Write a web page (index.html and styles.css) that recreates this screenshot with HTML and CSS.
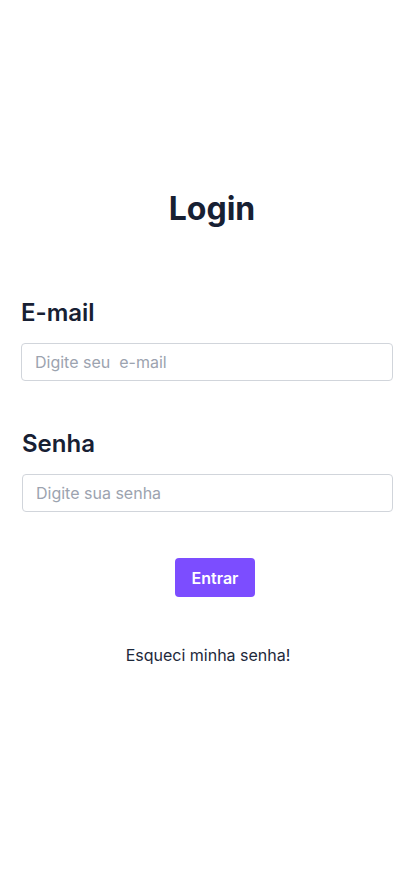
FILE: index.html
```html
<!DOCTYPE html>
<html lang="pt-BR">
<head>
<meta charset="utf-8">
<title>Login</title>
<link rel="stylesheet" href="styles.css">
</head>
<body>
<main class="login">
  <h1 class="title">Login</h1>
  <form class="form">
    <div class="field field-email">
      <label class="label" for="email">E-mail</label>
      <input class="input" id="email" type="email" placeholder="Digite seu  e-mail">
    </div>
    <div class="field field-senha">
      <label class="label" for="senha">Senha</label>
      <input class="input" id="senha" type="password" placeholder="Digite sua senha">
    </div>
    <div class="actions">
      <button class="btn" type="button">Entrar</button>
    </div>
  </form>
  <a class="forgot" href="#">Esqueci minha senha!</a>
</main>
</body>
</html>
```

FILE: styles.css
```css
* { box-sizing: border-box; }
html, body { margin: 0; padding: 0; background: #ffffff; }
body {
  font-family: Inter, "Noto Sans", sans-serif;
  color: #1e293b;
  width: 414px;
  height: 896px;
}
.login {
  display: flex;
  flex-direction: column;
  padding-top: 190px;
}
.title {
  margin: 0;
  padding-left: 10px;
  text-align: center;
  font-size: 32px;
  line-height: 38px;
  font-weight: 700;
  color: #172033;
}
.form {
  display: flex;
  flex-direction: column;
  margin-top: 69px;
}
.field {
  display: flex;
  flex-direction: column;
  gap: 14px;
  padding-right: 21px;
}
.field-email { padding-left: 21px; }
.field-senha { padding-left: 22px; margin-top: 47px; }
.label {
  font-size: 24px;
  line-height: 32px;
  font-weight: 600;
  color: #172033;
}
.input {
  height: 38px;
  width: 100%;
  border: 1px solid #d1d5db;
  border-radius: 4px;
  padding: 0 13px;
  font-family: Inter, "Noto Sans", sans-serif;
  font-size: 16px;
  color: #1e293b;
  background: #fff;
  outline: none;
}
.input::placeholder { color: #9ca3af; }
.actions {
  display: flex;
  justify-content: center;
  margin-top: 46px;
  padding-left: 16px;
}
.btn {
  width: 80px;
  height: 39px;
  border: 0;
  border-radius: 4px;
  background: #7c4dff;
  color: #ffffff;
  font-family: Inter, "Noto Sans", sans-serif;
  font-size: 16px;
  font-weight: 600;
  cursor: pointer;
}
.forgot {
  margin-top: 46px;
  align-self: center;
  padding-left: 2px;
  font-size: 16px;
  line-height: 24px;
  color: #1e293b;
  text-decoration: none;
}
```
